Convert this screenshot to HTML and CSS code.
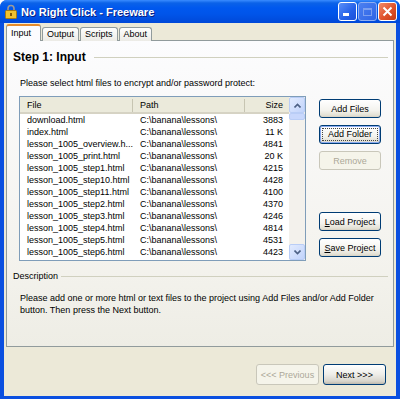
FILE: index.html
```html
<!DOCTYPE html>
<html lang="en">

<head>
    <meta charset="UTF-8">
    <title>No Right Click - Freeware</title>
    <link rel="stylesheet" href="styles.css">
</head>

<body>
    <div class="window">
        <div class="titlebar">
            <svg class="app-icon" width="12" height="15" viewBox="0 0 12 15">
                <path d="M3 7V4.5a3 3 0 0 1 6 0V7" fill="none" stroke="#9a9a9a" stroke-width="1.6" />
                <rect x="0.5" y="6.5" width="11" height="8" rx="1" fill="#f2c230" stroke="#a87a10" />
                <rect x="5" y="9" width="2" height="3" fill="#8a5a00" />
            </svg>
            <span class="title">No Right Click - Freeware</span>
            <div class="controls">
                <span class="ctl min"><i></i></span>
                <span class="ctl max"><i></i></span>
                <span class="ctl close">
                    <svg width="11" height="11" viewBox="0 0 11 11">
                        <path d="M1.5 1.5l8 8M9.5 1.5l-8 8" stroke="#fff" stroke-width="2" />
                    </svg>
                </span>
            </div>
        </div>

        <div class="client">
            <div class="tabs">
                <span class="tab active">Input</span>
                <span class="tab">Output</span>
                <span class="tab">Scripts</span>
                <span class="tab">About</span>
            </div>

            <div class="page">
                <div class="group-head step">
                    <span>Step 1: Input</span>
                    <div class="rule"></div>
                </div>
                <p class="prompt">Please select html files to encrypt and/or password protect:</p>

                <div class="files">
                    <div class="listview">
                        <div class="list-main">
                            <div class="list-head">
                                <span>File</span>
                                <span>Path</span>
                                <span class="num">Size</span>
                            </div>
                            <div class="list-rows">
                                <div class="row"><span>download.html</span><span>C:\banana\lessons\</span><span class="num">3883</span></div>
                                <div class="row"><span>index.html</span><span>C:\banana\lessons\</span><span class="num">11 K</span></div>
                                <div class="row"><span>lesson_1005_overview.h...</span><span>C:\banana\lessons\</span><span class="num">4841</span></div>
                                <div class="row"><span>lesson_1005_print.html</span><span>C:\banana\lessons\</span><span class="num">20 K</span></div>
                                <div class="row"><span>lesson_1005_step1.html</span><span>C:\banana\lessons\</span><span class="num">4215</span></div>
                                <div class="row"><span>lesson_1005_step10.html</span><span>C:\banana\lessons\</span><span class="num">4428</span></div>
                                <div class="row"><span>lesson_1005_step11.html</span><span>C:\banana\lessons\</span><span class="num">4100</span></div>
                                <div class="row"><span>lesson_1005_step2.html</span><span>C:\banana\lessons\</span><span class="num">4370</span></div>
                                <div class="row"><span>lesson_1005_step3.html</span><span>C:\banana\lessons\</span><span class="num">4246</span></div>
                                <div class="row"><span>lesson_1005_step4.html</span><span>C:\banana\lessons\</span><span class="num">4814</span></div>
                                <div class="row"><span>lesson_1005_step5.html</span><span>C:\banana\lessons\</span><span class="num">4531</span></div>
                                <div class="row"><span>lesson_1005_step6.html</span><span>C:\banana\lessons\</span><span class="num">4423</span></div>
                            </div>
                        </div>
                        <div class="scrollbar">
                            <span class="sb-btn">
                                <svg width="7" height="5" viewBox="0 0 7 5"><path d="M0.5 4.5l3-3 3 3" fill="none" stroke="#4d6185" stroke-width="1.6" /></svg>
                            </span>
                            <span class="sb-thumb"></span>
                            <span class="sb-track"></span>
                            <span class="sb-btn">
                                <svg width="7" height="5" viewBox="0 0 7 5"><path d="M0.5 0.5l3 3 3-3" fill="none" stroke="#4d6185" stroke-width="1.6" /></svg>
                            </span>
                        </div>
                    </div>

                    <div class="side">
                        <button class="btn">Add Files</button>
                        <button class="btn focused"><span>Add Folder</span></button>
                        <button class="btn" disabled>Remove</button>
                        <button class="btn load"><u>L</u>oad Project</button>
                        <button class="btn"><u>S</u>ave Project</button>
                    </div>
                </div>

                <div class="group-head desc-head">
                    <span>Description</span>
                    <div class="rule"></div>
                </div>
                <p class="desc">Please add one or more html or text files to the project using Add Files and/or Add Folder button. Then press the Next button.</p>
            </div>

            <div class="nav">
                <button class="btn wide" disabled>&lt;&lt;&lt; Previous</button>
                <button class="btn wide default">Next &gt;&gt;&gt;</button>
            </div>
        </div>
    </div>
</body>

</html>
```

FILE: styles.css
```css
* {
    box-sizing: border-box;
}

body {
    margin: 0;
    width: 400px;
    height: 399px;
    overflow: hidden;
    background: #fff;
    font-family: "Liberation Sans", Arial, sans-serif;
    font-size: 9px;
    color: #000;
}

.window {
    width: 400px;
    height: 399px;
    display: flex;
    flex-direction: column;
    background: #0a4fe0;
    border-radius: 7px 7px 0 0;
    overflow: hidden;
}

.titlebar {
    height: 23px;
    display: flex;
    align-items: center;
    padding: 0 3px 0 5px;
    background: linear-gradient(#3a8cff 0, #0b62e8 3px, #0058ee 8px, #0055ea 60%, #0048d8 100%);
}

.app-icon {
    flex-shrink: 0;
}

.title {
    margin-left: 4px;
    color: #fff;
    font-weight: bold;
    font-size: 11px;
    text-shadow: 1px 1px 0 #0a1f80;
    flex: 1;
}

.controls {
    display: flex;
    gap: 1px;
}

.ctl {
    width: 19px;
    height: 19px;
    border: 1px solid #fff;
    border-radius: 3px;
    display: flex;
    align-items: center;
    justify-content: center;
    position: relative;
}

.ctl.min {
    background: linear-gradient(135deg, #5a8ff8, #2460e8 60%, #1c50d8);
}

.ctl.min i {
    position: absolute;
    left: 4px;
    bottom: 4px;
    width: 6px;
    height: 3px;
    background: #fff;
}

.ctl.max {
    border-color: #8eaef2;
    background: linear-gradient(135deg, #4c80f0, #2e64e6);
}

.ctl.max i {
    width: 9px;
    height: 8px;
    border: 1px solid #7b9ff0;
    border-top-width: 2px;
}

.ctl.close {
    background: linear-gradient(135deg, #f08a6a, #e0532c 55%, #c63a14);
}

.client {
    flex: 1;
    margin: 0 4px 3px;
    background: #ece9d8;
    display: flex;
    flex-direction: column;
}

.tabs {
    display: flex;
    align-items: flex-end;
    height: 18px;
    padding: 1px 0 0 2px;
    margin-bottom: -1px;
    position: relative;
    z-index: 1;
}

.tab {
    height: 14px;
    padding: 0 4px;
    margin-right: 1px;
    border: 1px solid #919b9c;
    border-bottom: none;
    border-radius: 3px 3px 0 0;
    background: linear-gradient(#fefefe, #ecebe6);
    line-height: 13px;
}

.tab.active {
    height: 17px;
    padding: 0 4px 0 4px;
    width: 35px;
    background: #fcfcfe;
    border-top: 2px solid #e68b2c;
    line-height: 14px;
}

.page {
    height: 307px;
    margin: 0 2px 0 2px;
    border: 1px solid #919b9c;
    background: linear-gradient(#fcfcfe, #f4f3ee 70%, #eeede5);
    padding: 9px 5px 0 6px;
}

.group-head {
    display: flex;
    align-items: center;
    gap: 8px;
}

.group-head .rule {
    flex: 1;
    height: 1px;
    background: #d0d0bf;
}

.step {
    height: 14px;
    font-size: 12px;
    font-weight: bold;
}

.prompt {
    margin: 13px 0 0 7px;
    height: 12px;
    line-height: 12px;
}

.files {
    margin: 7px 0 0 6px;
    display: flex;
    gap: 13px;
}

.listview {
    width: 287px;
    height: 165px;
    border: 1px solid #7f9db9;
    background: #fff;
    display: flex;
}

.list-main {
    flex: 1;
}

.list-head,
.row {
    display: grid;
    grid-template-columns: 113px 112px 44px;
}

.list-head {
    height: 17px;
    line-height: 15px;
    background: #ebeadb;
    border-bottom: 2px solid #d6d3c4;
}

.list-head span {
    padding: 0 6px 0 7px;
    border-right: 1px solid #c7c5b2;
    margin: 2px 0 0;
    line-height: 13px;
}

.list-head span:last-child {
    border-right: none;
}

.list-rows {
    padding-top: 0;
}

.row {
    height: 12px;
    line-height: 12px;
}

.row span {
    padding: 0 6px 0 7px;
    white-space: nowrap;
    overflow: hidden;
}

.row span:nth-child(2),
.list-head span:nth-child(2) {
    padding-left: 7px;
}

.num {
    text-align: right;
}

.scrollbar {
    width: 16px;
    display: flex;
    flex-direction: column;
    background: #f3f1ec;
}

.sb-btn {
    height: 16px;
    border: 1px solid #b9cdf6;
    border-radius: 2px;
    background: linear-gradient(135deg, #e2ebfe, #c1d3fb);
    display: flex;
    align-items: center;
    justify-content: center;
}

.sb-thumb {
    height: 7px;
    border: 1px solid #b9cdf6;
    border-radius: 2px;
    background: #c8d7fc;
}

.sb-track {
    flex: 1;
}

.side {
    display: flex;
    flex-direction: column;
    padding-top: 3px;
    gap: 7px;
}

.btn {
    font-family: "Liberation Sans", Arial, sans-serif;
    font-size: 9px;
    width: 62px;
    height: 19px;
    padding: 0;
    color: #000;
    border: 1px solid #003c74;
    border-radius: 3px;
    background: linear-gradient(#ffffff, #f4f3ee 60%, #e3e0d4 90%, #d6d0c2);
}

.btn:disabled {
    color: #aca899;
    border-color: #c9c7ba;
    background: #f5f4ea;
}

.btn.focused {
    box-shadow: inset 0 0 0 1px #8aaaf0;
    padding: 2px;
}

.btn.focused span {
    display: block;
    height: 13px;
    line-height: 11px;
    border: 1px dotted #444;
}

.btn.load {
    margin-top: 35px;
}

.desc-head {
    margin-top: 9px;
    height: 12px;
    gap: 3px;
}

.desc {
    margin: 10px 0 0 7px;
    width: 360px;
    line-height: 12px;
}

.nav {
    display: flex;
    justify-content: flex-end;
    gap: 4px;
    padding: 17px 10px 0 0;
}

.btn.wide {
    width: 63px;
    height: 21px;
}

.btn.default {
    background: linear-gradient(#ffffff, #eeede8 50%, #d8d5cc 85%, #bdb9ad);
}
```
